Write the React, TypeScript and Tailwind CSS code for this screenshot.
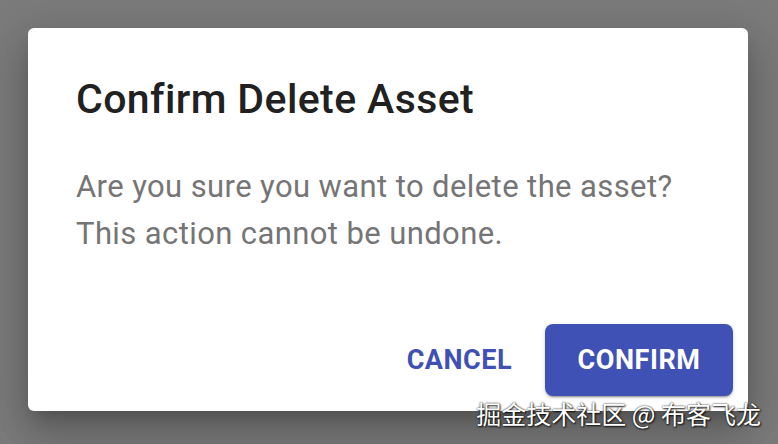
import React from "react";

export default function App() {
  return (
    <div
      className="relative w-[778px] h-[444px] bg-[#7b7b7b] overflow-hidden pl-[28px] pt-[28px]"
      style={{ fontFamily: "Roboto, 'Noto Sans', sans-serif" }}
    >
      <div className="w-[720px] h-[383px] bg-white rounded-[6px] shadow-[0_11px_15px_-7px_rgba(0,0,0,0.2),0_24px_38px_3px_rgba(0,0,0,0.14),0_9px_46px_8px_rgba(0,0,0,0.12)] flex flex-col">
        <h2 className="pl-[48px] pt-[47px] text-[41px] leading-[48px] font-medium text-[#212121] tracking-[0.4px]">
          Confirm Delete Asset
        </h2>
        <p className="pl-[48px] mt-[40px] text-[31px] leading-[47px] text-[#757575] tracking-[0.4px]">
          Are you sure you want to delete the asset?
          <br />
          This action cannot be undone.
        </p>
        <div className="mt-auto flex justify-end items-center gap-[16px] pr-[15px] pb-[15px]">
          <button className="h-[72px] px-[17px] text-[27px] font-bold text-[#3f51b5] tracking-[0.5px] rounded-[8px]">
            CANCEL
          </button>
          <button className="h-[72px] w-[188px] text-[27px] font-bold text-white bg-[#3f51b5] tracking-[0.6px] rounded-[8px] shadow-[0_3px_1px_-2px_rgba(0,0,0,0.2),0_2px_2px_0_rgba(0,0,0,0.14),0_1px_5px_0_rgba(0,0,0,0.12)]">
            CONFIRM
          </button>
        </div>
      </div>
      <div
        className="absolute right-[17px] bottom-[17px] text-[25px] leading-[28px] text-white [text-shadow:0_0_2px_rgba(0,0,0,0.9),1px_1px_2px_rgba(0,0,0,0.8)]"
        style={{ fontFamily: "'Noto Sans CJK SC', 'Noto Sans', sans-serif" }}
      >
        掘金技术社区 @ 布客飞龙
      </div>
    </div>
  );
}
